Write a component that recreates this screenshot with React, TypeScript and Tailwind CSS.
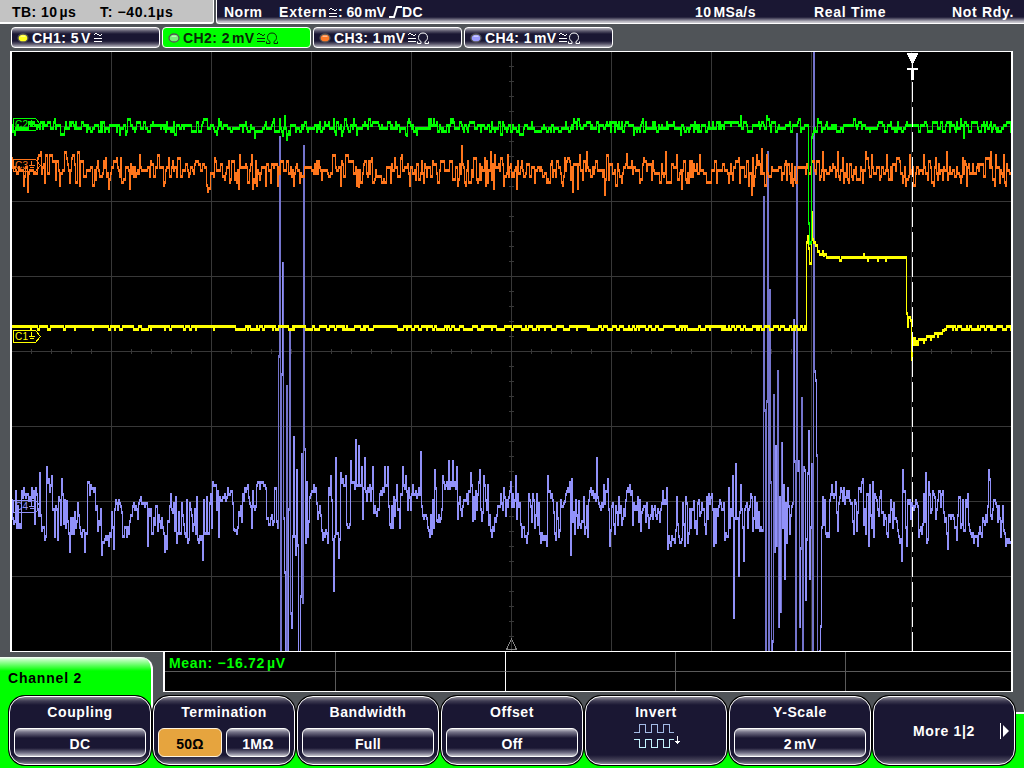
import React from "react";

type Point = [number, number];

const X0 = 12;
const X1 = 1011;

function makeRandom(seed: number) {
  let s = seed;
  return () => {
    s = (s * 1664525 + 1013904223) % 4294967296;
    return s / 4294967296;
  };
}

// y positions move in steps of three pixels, as the converter does
const snap = (y: number) => Math.round((y - 1) / 3) * 3 + 1;

function noisy(seed: number, base: (x: number) => number, amp: number, hold: number, keys: Point[]): Point[] {
  const rnd = makeRandom(seed);
  const fixed = new Map<number, number>(keys);
  const out: Point[] = [];
  for (let x = X0; x <= X1; x++) {
    const r = rnd() + rnd() - 1;
    const keep = rnd() < hold;
    const y = fixed.get(x);
    if (y !== undefined) out.push([x, y]);
    else if (keep && out.length && !fixed.has(x - 1)) out.push([x, out[out.length - 1][1]]);
    else out.push([x, snap(base(x) + r * amp)]);
  }
  return out;
}

// samples between two extremes fall at random inside their span
function between(seed: number, keys: Point[]): Point[] {
  const rnd = makeRandom(seed);
  const out: Point[] = [];
  let k = 0;
  for (let x = X0; x <= X1; x++) {
    while (k < keys.length && keys[k][0] < x) k++;
    const next = keys[Math.min(k, keys.length - 1)];
    const prev = keys[Math.max(k - 1, 0)];
    const t = rnd();
    const jitter = (rnd() - 0.5) * 10;
    if (next[0] === x) out.push([x, next[1]]);
    else {
      const a = Math.min(Math.max(prev[1], 484), 538);
      const b = Math.min(Math.max(next[1], 484), 538);
      out.push([x, snap(a + (b - a) * t + jitter)]);
    }
  }
  return out;
}

const yellowKeys: Point[] = [
  [806, 328], [807, 241], [808, 235], [809, 247], [810, 262], [811, 262], [812, 211], [813, 238], [814, 241], [815, 241],
  [816, 244], [817, 244], [818, 250], [819, 250], [820, 253], [821, 253], [822, 253], [823, 250], [824, 254], [825, 253], [826, 253], [827, 256],
];
for (let x = 828; x < 906; x++) yellowKeys.push([x, [840, 841, 868, 878, 886].includes(x) ? 259 : x === 864 ? 253 : 256]);
yellowKeys.push([906, 256], [907, 312], [908, 325], [909, 316], [910, 316], [911, 319], [912, 358], [913, 337], [914, 343], [915, 337], [916, 343], [917, 340], [918, 343]);
for (let x = 919; x < 945; x++) yellowKeys.push([x, 338 - Math.floor((x - 919) / 8) * 3 + (x % 7 === 0 ? 3 : 0)]);

const yellow = (() => {
  const rnd = makeRandom(77);
  const fixed = new Map<number, number>(yellowKeys);
  const out: Point[] = [];
  let level = 325;
  for (let x = X0; x <= X1; x++) {
    const low = x < 230 ? 0.22 : 0.45;
    if (rnd() < 0.6) level = rnd() < low ? 328 : 325;
    out.push([x, fixed.get(x) ?? level]);
  }
  return out;
})();

const green = noisy(5, () => 125.5, 8, 0.35, [
  [15, 133], [55, 118], [128, 118], [217, 133], [255, 136], [285, 115], [287, 138], [283, 134], [334, 118], [342, 134],
  [407, 134], [409, 118], [429, 118], [434, 118], [451, 118], [741, 115], [767, 115], [800, 118],
  [808, 124], [809, 222], [810, 242], [811, 241], [812, 136], [813, 133], [818, 118], [964, 136],
]);

const orange = noisy(21, () => 169, 19, 0.3, [
  [24, 184], [28, 190], [41, 151], [45, 181], [73, 154], [109, 187], [117, 157], [173, 160], [208, 190], [215, 157],
  [240, 154], [253, 187], [266, 184], [294, 184], [357, 184], [359, 185], [372, 157], [402, 154], [424, 181], [462, 145],
  [486, 184], [491, 151], [495, 154], [517, 187], [573, 190], [587, 151], [605, 193], [627, 153], [682, 187], [700, 154], [752, 193],
  [762, 148], [793, 184], [823, 151], [838, 151], [866, 151], [934, 184], [924, 154], [967, 184], [1004, 154],
]);

const violet = between(9, [
  [12, 499], [14, 522], [16, 490], [19, 526], [22, 490], [30, 496], [34, 490], [35, 522], [40, 472], [43, 526], [46, 535], [47, 466],
  [52, 475], [55, 535], [62, 478], [64, 522], [67, 500], [70, 550], [78, 502], [80, 526], [85, 550], [88, 481], [94, 490],
  [97, 505], [102, 553], [109, 544], [112, 511], [114, 547], [116, 499], [121, 505], [124, 535], [131, 514], [140, 499],
  [147, 502], [148, 544], [156, 505], [165, 550], [167, 547], [171, 493], [177, 541], [187, 499], [188, 541], [197, 496],
  [198, 538], [203, 558], [213, 481], [216, 484], [219, 535], [220, 496], [227, 496], [232, 490], [234, 528], [238, 526],
  [245, 487], [248, 484], [252, 526], [257, 484], [265, 484], [267, 517], [274, 520], [276, 487], [278, 526], [279, 355],
  [280, 136], [281, 654], [282, 373], [283, 262], [284, 517], [285, 571], [286, 654], [287, 385], [288, 654], [289, 508],
  [290, 331], [291, 612], [292, 626], [293, 535], [294, 436], [295, 535], [296, 553], [297, 469], [298, 544], [299, 654],
  [300, 654], [301, 595], [302, 453], [303, 601], [304, 145], [305, 448], [306, 541], [307, 481], [308, 535], [311, 493],
  [316, 487], [322, 529], [328, 541], [331, 475], [334, 589], [336, 457], [339, 556], [341, 472], [343, 478], [346, 475],
  [347, 523], [350, 523], [351, 460], [356, 439], [359, 445], [362, 466], [363, 517], [365, 457], [367, 499], [373, 466],
  [374, 511], [379, 508], [385, 466], [388, 466], [393, 526], [403, 466], [406, 475], [408, 508], [421, 451], [422, 505],
  [427, 517], [432, 532], [435, 469], [437, 519], [441, 517], [443, 475], [449, 460], [453, 460], [457, 466], [462, 514],
  [471, 472], [473, 519], [480, 469], [482, 519], [484, 475], [491, 529], [494, 529], [497, 514], [504, 487], [506, 514],
  [516, 475], [517, 517], [518, 493], [521, 523], [527, 541], [533, 493], [540, 532], [547, 544], [548, 475], [553, 499],
  [556, 538], [557, 502], [559, 535], [561, 499], [565, 500], [570, 481], [571, 553], [572, 478], [575, 532], [579, 500],
  [581, 526], [584, 496], [588, 535], [589, 499], [597, 457], [598, 496], [603, 505], [608, 478], [610, 544], [613, 502], [615, 532],
  [619, 496], [622, 523], [628, 487], [632, 490], [633, 523], [638, 496], [641, 529], [645, 505], [649, 526], [652, 505],
  [657, 517], [661, 508], [667, 487], [668, 547], [675, 541], [677, 496], [679, 535], [682, 538], [683, 502], [685, 544], [686, 496], [688, 541],
  [694, 500], [697, 532], [699, 499], [706, 532], [712, 493], [714, 544], [719, 505], [724, 502], [725, 538], [728, 535],
  [733, 475], [734, 616], [736, 463], [739, 574], [741, 484], [744, 559], [747, 502], [748, 526], [751, 493], [753, 529],
  [755, 496], [760, 529], [763, 529], [764, 196], [765, 409], [766, 654], [767, 400], [768, 151], [769, 654], [770, 289],
  [771, 481], [772, 654], [773, 640], [774, 394], [775, 550], [776, 445], [777, 544], [778, 370], [779, 625], [780, 496],
  [781, 610], [782, 442], [783, 526], [784, 484], [785, 577], [786, 502], [787, 541], [788, 487], [790, 532], [791, 514],
  [792, 505], [793, 502], [794, 319], [795, 460], [796, 654], [797, 133], [798, 469], [799, 460], [800, 625], [801, 547],
  [802, 397], [803, 654], [804, 466], [805, 469], [806, 598], [807, 538], [808, 472], [809, 430], [810, 577], [811, 526],
  [812, 463], [813, 654], [814, 50], [815, 370], [816, 379], [817, 454], [818, 654], [819, 654], [820, 650], [821, 625],
  [822, 526], [823, 496], [826, 532], [829, 535], [831, 493], [836, 481], [838, 529], [839, 502], [844, 487], [851, 502],
  [854, 532], [859, 487], [863, 478], [869, 544], [873, 481], [874, 535], [881, 490], [888, 535], [891, 499], [898, 529],
  [902, 559], [903, 469], [907, 544], [912, 502], [918, 505], [919, 535], [923, 523], [926, 472], [927, 541], [929, 481], [936, 517],
  [939, 490], [944, 511], [948, 547], [949, 514], [954, 517], [957, 538], [959, 496], [964, 529], [968, 493], [970, 529],
  [973, 532], [978, 544], [983, 517], [987, 520], [989, 469], [990, 478], [992, 517], [995, 499], [1001, 535], [1003, 505], [1006, 544],
  [1010, 541],
]);

function columns(points: Point[], pick: (h: number) => boolean) {
  let d = "";
  for (let i = 0; i < points.length - 1; i++) {
    const a = points[i][1];
    const b = points[i + 1][1];
    const h = Math.abs(a - b) + 3;
    if (pick(h)) d += `M${points[i][0]} ${Math.min(a, b)}h1v${h}h-1z`;
  }
  return d;
}

const all = () => true;
const gridX = [111, 211, 311, 411, 511, 611, 711, 811, 911];
const gridY = [126, 201, 276, 351, 426, 501, 576];
const ticksX = Array.from({ length: 49 }, (_, i) => 31 + i * 20);
const ticksY = Array.from({ length: 39 }, (_, i) => 66 + i * 15);

function Marker({ y, color, n }: { y: number; color: string; n: number }) {
  return (
    <g stroke={color} fill="none">
      <path d={`M13.5 ${y - 6}.5h22l5 6l-5 6h-22z`} />
      <path d={`M29 ${y}.5h6M30 ${y + 2}.5h4M31.5 ${y - 4}v5`} />
      <text x="15" y={y + 4} fill={color} stroke="none" fontSize="10" fontWeight="400" letterSpacing="0.4" fontFamily="Liberation Sans, sans-serif">{`C${n}`}</text>
    </g>
  );
}

function Screen() {
  return (
    <svg className="block h-[599px] w-[999px]" viewBox="12 52 999 599" shapeRendering="crispEdges">
      <g fill="#383838">
        {gridX.map((x) => <rect key={x} x={x} y={52} width={1} height={599} />)}
        {gridY.map((y) => <rect key={y} x={12} y={y} width={999} height={1} />)}
        {ticksX.map((x) => <rect key={x} x={x} y={349} width={1} height={5} />)}
        {ticksY.map((y) => <rect key={y} x={509} y={y} width={5} height={1} />)}
      </g>
      <path d={columns(violet, (h) => h > 150)} fill="#7474cc" />
      <path d={columns(violet, (h) => h <= 150)} fill="#9191f9" />
      <Marker y={506} color="#9191f9" n={4} />
      <path d={columns(orange, all)} fill="#ff761c" />
      <Marker y={165} color="#ff761c" n={3} />
      <path d={columns(yellow, all)} fill="#ffff00" />
      <Marker y={336} color="#ffff00" n={1} />
      <path d={columns(green, all)} fill="#00ff00" />
      <Marker y={124} color="#00ff00" n={2} />
      <g fill="#ffffff">
        <path d="M907 53h11v2h-1v2h-1v2h-1v2h-1v2h-3v-2h-1v-2h-1v-2h-1v-2h-1z" />
        <path d="M912 63h1v5h5v2h-4v10h-3v-10h-4v-2h5z" />
        {Array.from({ length: 23 }, (_, i) => <rect key={i} x={912} y={82 + i * 25} width={1} height={20} />)}
      </g>
      <path d="M511.5 639L506.5 649.5H516.5Z" fill="none" stroke="#858585" />
    </svg>
  );
}

function Approx() {
  return (
    <svg className="block h-[11px] w-[10px] shrink-0" viewBox="0 0 10 11" fill="none" stroke="currentColor" shapeRendering="crispEdges">
      <path d="M1 2.5H2M2 1.5H4M4 2.5H6M6 3.5H8M8 2.5H9M1 6.5H9M1 9.5H9" />
    </svg>
  );
}

function ThinOmega() {
  return (
    <svg className="block h-[12px] w-[12px] shrink-0" viewBox="0 0 12 12" fill="none" stroke="currentColor">
      <path d="M0.5 9.5V11.5H4V9.5C2.2 8.6 1.5 7.2 1.5 5.5C1.5 2.8 3.2 1 6 1S10.5 2.8 10.5 5.5C10.5 7.2 9.8 8.6 8 9.5V11.5H11.5V9.5" />
    </svg>
  );
}

const channels = [
  { label: "CH1: 5", unit: "V", omega: false, dot: "#ffff20", active: false },
  { label: "CH2: 2", unit: "mV", omega: true, dot: "#78f078", active: true },
  { label: "CH3: 1", unit: "mV", omega: true, dot: "#ff7a28", active: false },
  { label: "CH4: 1", unit: "mV", omega: true, dot: "#9c9cff", active: false },
];

function ChannelTag({ c }: { c: (typeof channels)[number] }) {
  const skin = c.active
    ? "bg-[#00ff00] text-[#082808]"
    : "bg-[linear-gradient(to_bottom,#b8b7c0_0,#5b586c_3px,#1a1733_6px,#1a1733_13px,#5b586c_16px,#b8b7c0_19px)] text-white";
  return (
    <div className={`flex h-[21px] w-[149px] items-center rounded-[4px] border border-white pl-[5px] ${skin}`}>
      <svg className="mr-[3px] block h-[10px] w-[12px]" viewBox="0 0 12 10">
        <ellipse cx="6" cy="5" rx="5" ry="4" fill={c.dot} stroke="#555" strokeWidth="1.3" />
        <path d="M3.5 3.2H8.5" stroke="#fff" strokeOpacity="0.7" />
      </svg>
      <span className="tracking-[0.45px]">{c.label}</span>
      <span className="ml-[2px] mr-[2px] tracking-[0.2px]">{c.unit}</span>
      <Approx />
      {c.omega && <ThinOmega />}
    </div>
  );
}

function Key({ title, children }: { title?: string; children: React.ReactNode }) {
  return (
    <div className="h-[71px] w-[144px] rounded-[17px] bg-black p-px">
      <div className="flex h-full flex-col items-center rounded-[16px] border-[1.5px] border-white bg-[linear-gradient(to_bottom,#8e8c99_0,#3f3c53_4px,#1a1733_8px,#1a1733_58px,#4c495f_64px,#a09eaa_68px)] pt-[5px]">
        {title && <div className="h-[20px] leading-[20px] tracking-[0.6px]">{title}</div>}
        {children}
      </div>
    </div>
  );
}

function Field({ text, small, lit }: { text: string; small?: boolean; lit?: boolean }) {
  const skin = lit
    ? "bg-[#e6a43e] text-black border-[#fff3df]"
    : "bg-[linear-gradient(to_bottom,#c9c8cf_0,#77758a_3px,#1a1733_9px,#1a1733_19px,#77758a_24px,#c9c8cf_27px)] text-white border-white";
  return (
    <div className={`flex h-[29px] items-center justify-center rounded-[6px] border pt-[2px] tracking-[0.3px] [word-spacing:-2px] ${small ? "w-[64px]" : "w-[132px]"} ${skin}`}>
      {text}
    </div>
  );
}

export default function App() {
  return (
    <div className="flex h-[768px] w-[1024px] flex-col overflow-hidden bg-[#505458] font-['Liberation_Sans',Arial,sans-serif] text-[14px] font-bold leading-none text-white">
      <div className="flex h-[24px] shrink-0 gap-[2px] whitespace-pre">
        <div className="flex w-[214px] items-center rounded-br-[3px] border-b-2 border-r border-white bg-[#c3c3c3] pl-[12px] pt-px text-black">
          <span className="w-[88px] tracking-[0.45px]">TB: 10<span className="ml-[2px]">µs</span></span>
          <span className="tracking-[0.65px]">T: −40.1µs</span>
        </div>
        <div className="flex flex-1 items-center rounded-bl-[3px] border-b border-l border-white bg-[linear-gradient(to_bottom,#1a1733_17px,#5e5b70_19px,#c8c7ce_22px)] pl-[7px] pt-px">
          <span className="w-[55px] tracking-[0.5px]">Norm</span>
          <span className="w-[49px] tracking-[0.8px]">Extern</span>
          <Approx />
          <span className="w-[51px]">: 60<span className="ml-[2px]">mV</span></span>
          <svg className="block h-[12px] w-[13px]" viewBox="0 0 13 12" fill="none" stroke="#fff" strokeWidth="2"><path d="M0 11H5L8 1H13" /></svg>
          <span className="w-[293px] tracking-[0.4px]">DC</span>
          <span className="w-[119px] tracking-[0.4px]">10<span className="ml-[2px]">MSa/s</span></span>
          <span className="w-[138px] tracking-[0.7px]">Real Time</span>
          <span className="tracking-[0.7px]">Not Rdy.</span>
        </div>
      </div>

      <div className="flex h-[27px] shrink-0 gap-[2px] pl-[11px] pt-[3px]">
        {channels.map((c) => <ChannelTag key={c.label} c={c} />)}
      </div>

      <div className="ml-[10px] h-[601px] w-[1003px] shrink-0 border-x-2 border-y border-white bg-black">
        <Screen />
      </div>

      <div className="flex h-[116px] shrink-0 flex-col bg-[linear-gradient(to_bottom,#505458_60px,#fff_60px,#fff_62px,#00ff00_62px)]">
        <div className="flex h-[43px] shrink-0">
          <div className="mt-[5px] h-[56px] w-[153px] shrink-0 rounded-tr-[12px] border-r-2 border-white bg-[linear-gradient(to_bottom,#fff_0,#b9ffb9_3px,#00ff00_14px)] pl-[8px] pt-[14px] tracking-[0.8px] text-black">
            Channel 2
          </div>
          <div className="ml-[10px] h-[40px] w-[850px] shrink-0 border-b border-l-2 border-r-2 border-white bg-black">
            <div className="grid h-full grid-cols-[171px_170px_170px_170px_1fr] grid-rows-[20px_19px]">
              <div className="col-span-2 border-b border-r border-b-[#5a5a5a] border-r-white bg-[linear-gradient(to_right,transparent_170px,#5a5a5a_170px,#5a5a5a_171px,transparent_171px)] pl-[4px] pt-[4px] tracking-[0.7px] text-[#00ff00]">
                Mean: −16.72<span className="ml-[2px]">µV</span>
              </div>
              <div className="border-b border-r border-[#5a5a5a]" />
              <div className="border-b border-r border-[#5a5a5a]" />
              <div className="border-b border-[#5a5a5a]" />
              <div className="border-r border-[#5a5a5a]" />
              <div className="border-r border-white" />
              <div className="border-r border-[#5a5a5a]" />
              <div className="border-r border-[#5a5a5a]" />
              <div />
            </div>
          </div>
        </div>
        <div className="flex h-[73px] shrink-0">
          <div className="h-[73px] w-[8px] shrink-0 bg-[#00ff00]" />
          <div className="flex h-[73px] shrink-0">
            <div className="h-[73px] bg-[linear-gradient(to_right,#00ff00_143px,transparent_143px)]">
              <Key title="Coupling"><div className="mt-[6px]"><Field text="DC" /></div></Key>
            </div>
            <Key title="Termination">
              <div className="mt-[6px] flex gap-[4px]"><Field text="50Ω" small lit /><Field text="1MΩ" small /></div>
            </Key>
            <Key title="Bandwidth"><div className="mt-[6px]"><Field text="Full" /></div></Key>
            <Key title="Offset"><div className="mt-[6px]"><Field text="Off" /></div></Key>
            <Key title="Invert">
              <svg className="mt-px ml-[2px] block h-[28px] w-[48px]" viewBox="0 0 48 28" fill="none" shapeRendering="crispEdges">
                <path d="M1 9.5H6.5V1.5H12.5V9.5H18.5V1.5H24.5V9.5H30.5V1.5H36.5V9.5H41" stroke="#a4bbe6" />
                <path d="M1 16.5H6.5V24.5H12.5V16.5H18.5V24.5H24.5V16.5H30.5V24.5H36.5V16.5H41" stroke="#c5f4ff" />
                <path d="M44.5 13V21M42 18.5H47M43 19.5H46M44 20.5H45" stroke="#fff" />
              </svg>
            </Key>
            <Key title="Y-Scale"><div className="mt-[6px]"><Field text="2 mV" /></div></Key>
            <Key>
              <div className="flex w-full items-center justify-end pt-[21px]">
                <span className="w-[87px] tracking-[0.65px]">More 1|2</span>
                <svg className="mr-[5px] block h-[16px] w-[9px]" viewBox="0 0 9 16"><path d="M0.5 0V16" stroke="#fff" /><path d="M3 2L9 8L3 14Z" fill="#fff" /></svg>
              </div>
            </Key>
          </div>
        </div>
      </div>
    </div>
  );
}
